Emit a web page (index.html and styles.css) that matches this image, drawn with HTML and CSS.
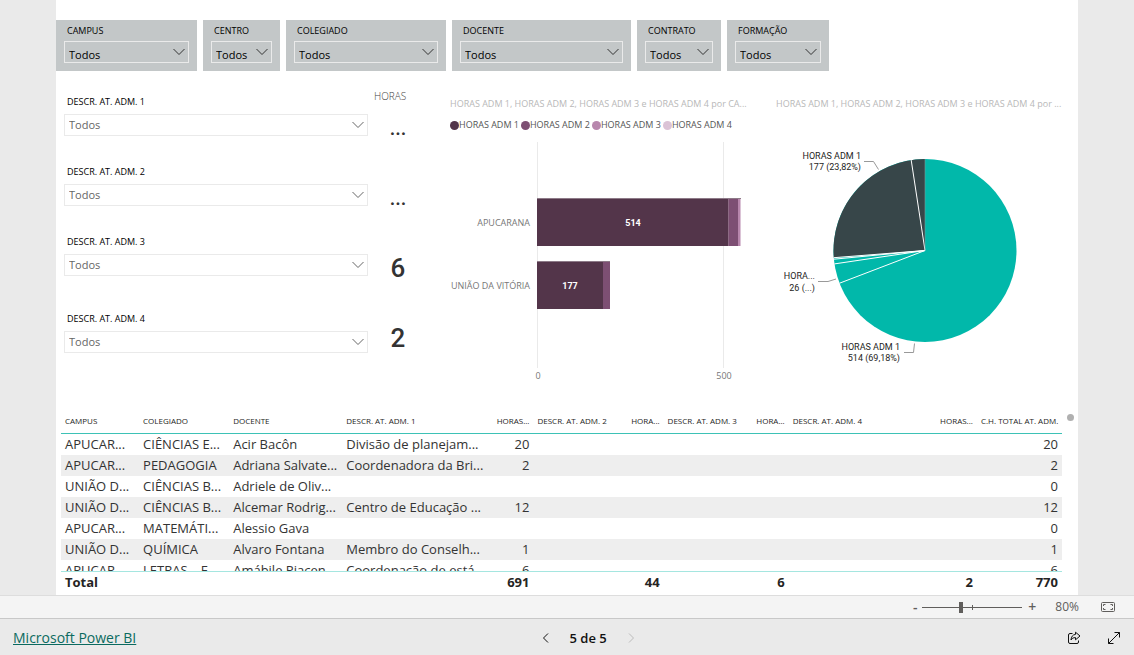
FILE: index.html
```html
<!DOCTYPE html>
<html lang="pt-BR">
<head>
<meta charset="utf-8">
<meta name="viewport" content="width=device-width, initial-scale=1">
<title>Microsoft Power BI</title>
<link rel="stylesheet" href="styles.css">
</head>
<body>
<svg class="defs" aria-hidden="true">
  <symbol id="chevron" viewBox="0 0 12 8"><path d="M0.5 1 6 6.5 11.5 1" fill="none" stroke="currentColor"/></symbol>
</svg>

<main class="report">
  <section class="filters">
    <div class="filter"><label class="caption" for="campus">CAMPUS</label><div class="dropdown"><select id="campus"><option>Todos</option></select><svg><use href="#chevron"/></svg></div></div>
    <div class="filter"><label class="caption" for="centro">CENTRO</label><div class="dropdown"><select id="centro"><option>Todos</option></select><svg><use href="#chevron"/></svg></div></div>
    <div class="filter"><label class="caption" for="colegiado">COLEGIADO</label><div class="dropdown"><select id="colegiado"><option>Todos</option></select><svg><use href="#chevron"/></svg></div></div>
    <div class="filter"><label class="caption" for="docente">DOCENTE</label><div class="dropdown"><select id="docente"><option>Todos</option></select><svg><use href="#chevron"/></svg></div></div>
    <div class="filter"><label class="caption" for="contrato">CONTRATO</label><div class="dropdown"><select id="contrato"><option>Todos</option></select><svg><use href="#chevron"/></svg></div></div>
    <div class="filter"><label class="caption" for="formacao">FORMAÇÃO</label><div class="dropdown"><select id="formacao"><option>Todos</option></select><svg><use href="#chevron"/></svg></div></div>
  </section>

  <section class="visuals">
    <div class="slicers">
      <div class="slicer"><label class="caption" for="adm1">DESCR. AT. ADM. 1</label><div class="dropdown"><select id="adm1"><option>Todos</option></select><svg><use href="#chevron"/></svg></div></div>
      <div class="slicer"><label class="caption" for="adm2">DESCR. AT. ADM. 2</label><div class="dropdown"><select id="adm2"><option>Todos</option></select><svg><use href="#chevron"/></svg></div></div>
      <div class="slicer"><label class="caption" for="adm3">DESCR. AT. ADM. 3</label><div class="dropdown"><select id="adm3"><option>Todos</option></select><svg><use href="#chevron"/></svg></div></div>
      <div class="slicer slicer-last"><label class="caption" for="adm4">DESCR. AT. ADM. 4</label><div class="dropdown"><select id="adm4"><option>Todos</option></select><svg><use href="#chevron"/></svg></div></div>
    </div>

    <div class="cards">
      <h2 class="cards-title">HORAS</h2>
      <div class="card card-short">...</div>
      <div class="card card-short">...</div>
      <div class="card">6</div>
      <div class="card">2</div>
    </div>

    <figure class="chart">
      <figcaption class="chart-title">HORAS ADM 1, HORAS ADM 2, HORAS ADM 3 e HORAS ADM 4 por CA...</figcaption>
      <ul class="legend">
        <li><i class="dot tone1"></i>HORAS ADM 1</li>
        <li><i class="dot tone2"></i>HORAS ADM 2</li>
        <li><i class="dot tone3"></i>HORAS ADM 3</li>
        <li><i class="dot tone4"></i>HORAS ADM 4</li>
      </ul>
      <svg class="plot" viewBox="0 0 320 250" role="img" aria-label="Horas por campus">
        <path d="M87.5 6V232M273.5 6V232" stroke="#eaeaea"/>
        <g>
          <rect x="87" y="62" width="192" height="48" fill="#53354a"/>
          <rect x="279" y="62" width="9" height="48" fill="#7d4f73"/>
          <rect x="288" y="62" width="2" height="48" fill="#b887ad"/>
          <rect x="290" y="62" width="1" height="48" fill="#dbc3d6"/>
          <path d="M278.5 62V110" stroke="#8d6a84"/>
          <rect x="87" y="125" width="66" height="48" fill="#53354a"/>
          <rect x="153" y="125" width="7" height="48" fill="#7d4f73"/>
          <path d="M87 62.500H291M87 125.500H160" stroke="#8d7a88"/>
        </g>
        <g class="axis" text-anchor="end">
          <text x="80" y="90">APUCARANA</text>
          <text x="80" y="153">UNIÃO DA VITÓRIA</text>
        </g>
        <g class="axis" text-anchor="middle">
          <text x="88" y="243">0</text>
          <text x="274" y="243">500</text>
        </g>
        <g class="bar-value" text-anchor="middle">
          <text x="183" y="90">514</text>
          <text x="120" y="153">177</text>
        </g>
      </svg>
    </figure>

    <figure class="chart">
      <figcaption class="chart-title">HORAS ADM 1, HORAS ADM 2, HORAS ADM 3 e HORAS ADM 4 por ...</figcaption>
      <svg class="plot pie" viewBox="0 0 302 230" role="img" aria-label="Horas por atividade">
        <circle cx="149" cy="110.500" r="91.500" fill="#01b8aa"/>
        <path d="M149 110.500 57.800 117.700A91.500 91.500 0 0 1 149 19Z" fill="#374649"/>
        <path d="M149 110.500 63.550 143.200M149 110.500 58.500 123.900M149 110.500 57.900 119.200M149 110.500 57.800 117.700M149 110.500 135.200 20.050" stroke="#fff"/>
        <path d="M149 19V110.500" stroke="#7c9c9b" stroke-width="0.600"/>
        <path d="M88 21.500H97.500L102.500 29.500M42 141.500H52L60 139M128 212.500H137.500L138.500 203.500" fill="none" stroke="#999"/>
        <g class="pie-label" text-anchor="end">
          <text x="85" y="19">HORAS ADM 1</text>
          <text x="85" y="30">177 (23,82%)</text>
          <text x="39" y="139">HORA...</text>
          <text x="39" y="151">26 (...)</text>
          <text x="124" y="210">HORAS ADM 1</text>
          <text x="124" y="221">514 (69,18%)</text>
        </g>
      </svg>
    </figure>
  </section>

  <section class="grid-area">
    <table class="grid">
      <thead>
        <tr><th>CAMPUS</th><th>COLEGIADO</th><th>DOCENTE</th><th>DESCR. AT. ADM. 1</th><th class="num">HORAS...</th><th>DESCR. AT. ADM. 2</th><th class="num">HORA...</th><th>DESCR. AT. ADM. 3</th><th class="num">HORA...</th><th>DESCR. AT. ADM. 4</th><th class="num">HORAS...</th><th class="num">C.H. TOTAL AT. ADM.</th></tr>
      </thead>
      <tbody>
        <tr><td>APUCAR...</td><td>CIÊNCIAS E...</td><td>Acir Bacôn</td><td>Divisão de planejam...</td><td class="num">20</td><td></td><td></td><td></td><td></td><td></td><td></td><td class="num">20</td></tr>
        <tr><td>APUCAR...</td><td>PEDAGOGIA</td><td>Adriana Salvate...</td><td>Coordenadora da Bri...</td><td class="num">2</td><td></td><td></td><td></td><td></td><td></td><td></td><td class="num">2</td></tr>
        <tr><td>UNIÃO D...</td><td>CIÊNCIAS B...</td><td>Adriele de Oliv...</td><td></td><td></td><td></td><td></td><td></td><td></td><td></td><td></td><td class="num">0</td></tr>
        <tr><td>UNIÃO D...</td><td>CIÊNCIAS B...</td><td>Alcemar Rodrig...</td><td>Centro de Educação ...</td><td class="num">12</td><td></td><td></td><td></td><td></td><td></td><td></td><td class="num">12</td></tr>
        <tr><td>APUCAR...</td><td>MATEMÁTI...</td><td>Alessio Gava</td><td></td><td></td><td></td><td></td><td></td><td></td><td></td><td></td><td class="num">0</td></tr>
        <tr><td>UNIÃO D...</td><td>QUÍMICA</td><td>Alvaro Fontana</td><td>Membro do Conselh...</td><td class="num">1</td><td></td><td></td><td></td><td></td><td></td><td></td><td class="num">1</td></tr>
        <tr><td>APUCAR...</td><td>LETRAS – E...</td><td>Amábile Piacen...</td><td>Coordenação de está...</td><td class="num">6</td><td></td><td></td><td></td><td></td><td></td><td></td><td class="num">6</td></tr>
      </tbody>
      <tfoot>
        <tr><td>Total</td><td></td><td></td><td></td><td class="num">691</td><td></td><td class="num">44</td><td></td><td class="num">6</td><td></td><td class="num">2</td><td class="num">770</td></tr>
      </tfoot>
    </table>
    <span class="scroll-thumb"></span>
  </section>
</main>

<div class="zoom-bar">
  <button class="zoom-step" type="button" aria-label="Reduzir">-</button>
  <div class="zoom-slider">
    <input type="range" min="0" max="208" value="80" aria-label="Zoom">
    <span class="zoom-tick"></span>
  </div>
  <button class="zoom-step" type="button" aria-label="Ampliar">+</button>
  <span class="zoom-value">80%</span>
  <button class="fit" type="button" aria-label="Ajustar à página">
    <svg width="14" height="10" viewBox="0 0 14 10" fill="none" stroke="currentColor"><rect x="0.500" y="0.500" width="13" height="9" rx="1"/><path d="M2.500 4V2.500H4.500M9.500 2.500H11.500V4M11.500 6V7.500H9.500M4.500 7.500H2.500V6"/></svg>
  </button>
</div>

<footer class="footer">
  <a class="brand" href="#">Microsoft Power BI</a>
  <nav class="pager">
    <button type="button" aria-label="Página anterior"><svg width="7" height="10" viewBox="0 0 7 10" fill="none" stroke="currentColor"><path d="M6 0.500 1.500 5 6 9.500"/></svg></button>
    <span class="page">5 de 5</span>
    <button type="button" disabled aria-label="Próxima página"><svg width="7" height="10" viewBox="0 0 7 10" fill="none" stroke="currentColor"><path d="M1 0.500 5.500 5 1 9.500"/></svg></button>
  </nav>
  <div class="actions">
    <button type="button" aria-label="Compartilhar"><svg width="14" height="14" viewBox="0 0 14 14" fill="none" stroke="currentColor" stroke-linejoin="round"><path d="M5.500 2.500H3A1.500 1.500 0 0 0 1.500 4V11A1.500 1.500 0 0 0 3 12.500H10A1.500 1.500 0 0 0 11.500 11V9.500"/><path d="M8.500 1.200 13 5 8.500 8.800V6.600C6.400 6.600 5 7.200 4 9 4.200 5.800 5.600 3.700 8.500 3.400Z"/></svg></button>
    <button type="button" aria-label="Tela cheia"><svg width="14" height="14" viewBox="0 0 14 14" fill="none" stroke="currentColor"><path d="M1.500 12.500 12.500 1.500M7.500 1.500H12.500V6.500M1.500 7.500V12.500H6.500"/></svg></button>
  </div>
</footer>
</body>
</html>
```

FILE: styles.css
```css
* { box-sizing: border-box; }

body {
  margin: 0;
  min-height: 100vh;
  display: flex;
  flex-direction: column;
  background: #eaeaea;
  color: #252423;
  font: 13px/18px "Open Sans", "Noto Sans", sans-serif;
}

button {
  display: grid;
  place-items: center;
  padding: 0;
  border: 0;
  background: none;
  color: inherit;
  font: inherit;
}

.defs { display: none; }

.report {
  flex: 1;
  display: flex;
  flex-direction: column;
  margin: 0 56px;
  padding-top: 20px;
  background: #fff;
}

/* Slicers */
.filters {
  display: grid;
  grid-template-columns: 141fr 77fr 160fr 179fr 84fr 102fr 243fr;
  gap: 6px;
}

.filter {
  padding: 4px 8px 8px;
  background: #c3c7c8;
}

.caption {
  display: block;
  padding-left: 3px;
  color: #000;
  font-size: 9px;
  line-height: 14px;
  white-space: nowrap;
}

.dropdown {
  display: grid;
  align-items: center;
  color: #666;
}

.dropdown select,
.dropdown svg { grid-area: 1 / 1; }

.dropdown select {
  width: 100%;
  height: 22px;
  padding: 0 20px 0 4px;
  appearance: none;
  border: 1px solid #eaeaea;
  border-radius: 0;
  background: transparent;
  color: inherit;
  font: 11px/20px "Open Sans", "Noto Sans", sans-serif;
}

.dropdown svg {
  justify-self: end;
  width: 12px;
  height: 8px;
  margin-right: 4px;
  pointer-events: none;
}

.filter .dropdown {
  margin-top: 3px;
  color: #333;
}

.filter .dropdown select {
  padding-top: 3px;
  color: #000;
}

.slicer .dropdown { margin-top: 5px; }

/* Middle band */
.visuals {
  display: grid;
  grid-template-columns: 304fr 70fr 320fr 302fr;
  gap: 6px;
  padding: 18px 0 0 8px;
}

.slicers {
  display: flex;
  flex-direction: column;
  gap: 29px;
  padding-top: 6px;
}

.slicer-last { margin-top: 7px; }

.cards {
  display: flex;
  flex-direction: column;
  gap: 40px;
  width: 48px;
}

.cards-title {
  margin: 0 0 -30px;
  color: #444;
  font-size: 10px;
  font-weight: 300;
  line-height: 14px;
}

.card {
  color: #333;
  font: 500 26px/30px Roboto, sans-serif;
  text-align: center;
}

.card-short { font-size: 20px; line-height: 30px; }

.chart {
  min-width: 0;
  margin: 0;
}

.chart-title {
  padding-top: 8px;
  overflow: hidden;
  color: #b8b8b8;
  font-size: 9px;
  line-height: 14px;
  white-space: nowrap;
}

.legend {
  display: flex;
  gap: 2px;
  margin: 7px 0 4px;
  padding: 0;
  list-style: none;
  color: #555;
  font-size: 9px;
  line-height: 14px;
  white-space: nowrap;
}

.legend li {
  display: flex;
  align-items: center;
}

.dot {
  width: 9px;
  height: 9px;
  border-radius: 50%;
}

.tone1 { background: #53354a; }
.tone2 { background: #7d4f73; }
.tone3 { background: #b887ad; }
.tone4 { background: #dbc3d6; }

.plot {
  display: block;
  width: 100%;
  font-size: 9px;
}

.pie { margin-top: 29px; }
.axis { fill: #777; }
.bar-value { fill: #fff; font-weight: 700; font-family: Roboto, sans-serif; }
.pie-label { fill: #252423; font-family: Roboto, sans-serif; }

/* Table: every row shares one set of columns; the body takes the height left between header and total */
.grid-area {
  flex: 1;
  display: flex;
  gap: 5px;
  margin-top: 22px;
  padding: 0 4px 0 5px;
}

.grid {
  flex: 1;
  display: flex;
  flex-direction: column;
}

.grid thead,
.grid tfoot { display: block; }

.grid tbody {
  display: block;
  flex: 1 0 0;
  min-height: 137px;
  height: 137px;
  overflow: hidden;
}

.grid tr {
  display: grid;
  grid-template-columns: 78fr 90fr 113fr 148fr 43fr 88fr 42fr 86fr 39fr 144fr 44fr 85fr;
}

.grid th,
.grid td {
  min-width: 0;
  height: 21px;
  padding: 0 4px;
  text-align: left;
  white-space: nowrap;
}

.grid thead th {
  height: 26px;
  padding-top: 6px;
  border-bottom: 1px solid #3dc2b6;
  font-size: 8px;
  font-weight: 400;
  line-height: 14px;
}

.grid tbody td {
  color: #333;
  line-height: 21px;
}

.grid tbody tr:nth-child(even) td { background: #eee; }

.grid tfoot td {
  height: 24px;
  border-top: 1px solid #a5e6e0;
  font-weight: 700;
  line-height: 20px;
}

.grid tr .num { text-align: right; }

.scroll-thumb {
  width: 7px;
  height: 7px;
  margin-top: 6px;
  border-radius: 50%;
  background: #b0b0b0;
}

/* Zoom bar */
.zoom-bar {
  display: flex;
  align-items: center;
  justify-content: flex-end;
  height: 23px;
  padding-right: 19px;
  border-top: 1px solid #ddd;
  background: #f4f4f4;
  color: #605e5c;
}

.zoom-step {
  width: 14px;
  font-size: 14px;
  font-weight: 600;
}

.zoom-slider {
  position: relative;
  width: 100px;
  margin: 0 3px 0 0;
}

.zoom-slider input {
  display: block;
  width: 100%;
  height: 11px;
  margin: 0;
  appearance: none;
  background: linear-gradient(#605e5c, #605e5c) center / 100% 1px no-repeat;
}

.zoom-slider input::-webkit-slider-thumb {
  appearance: none;
  width: 4px;
  height: 11px;
  background: #605e5c;
}

.zoom-tick {
  position: absolute;
  top: 3px;
  left: 50%;
  width: 1px;
  height: 5px;
  background: #605e5c;
}

.zoom-value {
  margin: 0 22px 0 16px;
  font-size: 12px;
}

/* Footer */
.footer {
  display: flex;
  align-items: center;
  justify-content: space-between;
  height: 37px;
  padding: 2px 0 0 13px;
  border-top: 1px solid #c8c8c8;
  color: #111;
}

.brand {
  color: #0b6a5f;
  font-size: 14px;
}

.pager {
  display: flex;
  align-items: center;
  gap: 21px;
}

.pager button:disabled { color: #bbb; }

.page { font-weight: 600; }

.actions {
  display: flex;
  padding-left: 14px;
}

.actions button {
  width: 40px;
  height: 34px;
}
```
